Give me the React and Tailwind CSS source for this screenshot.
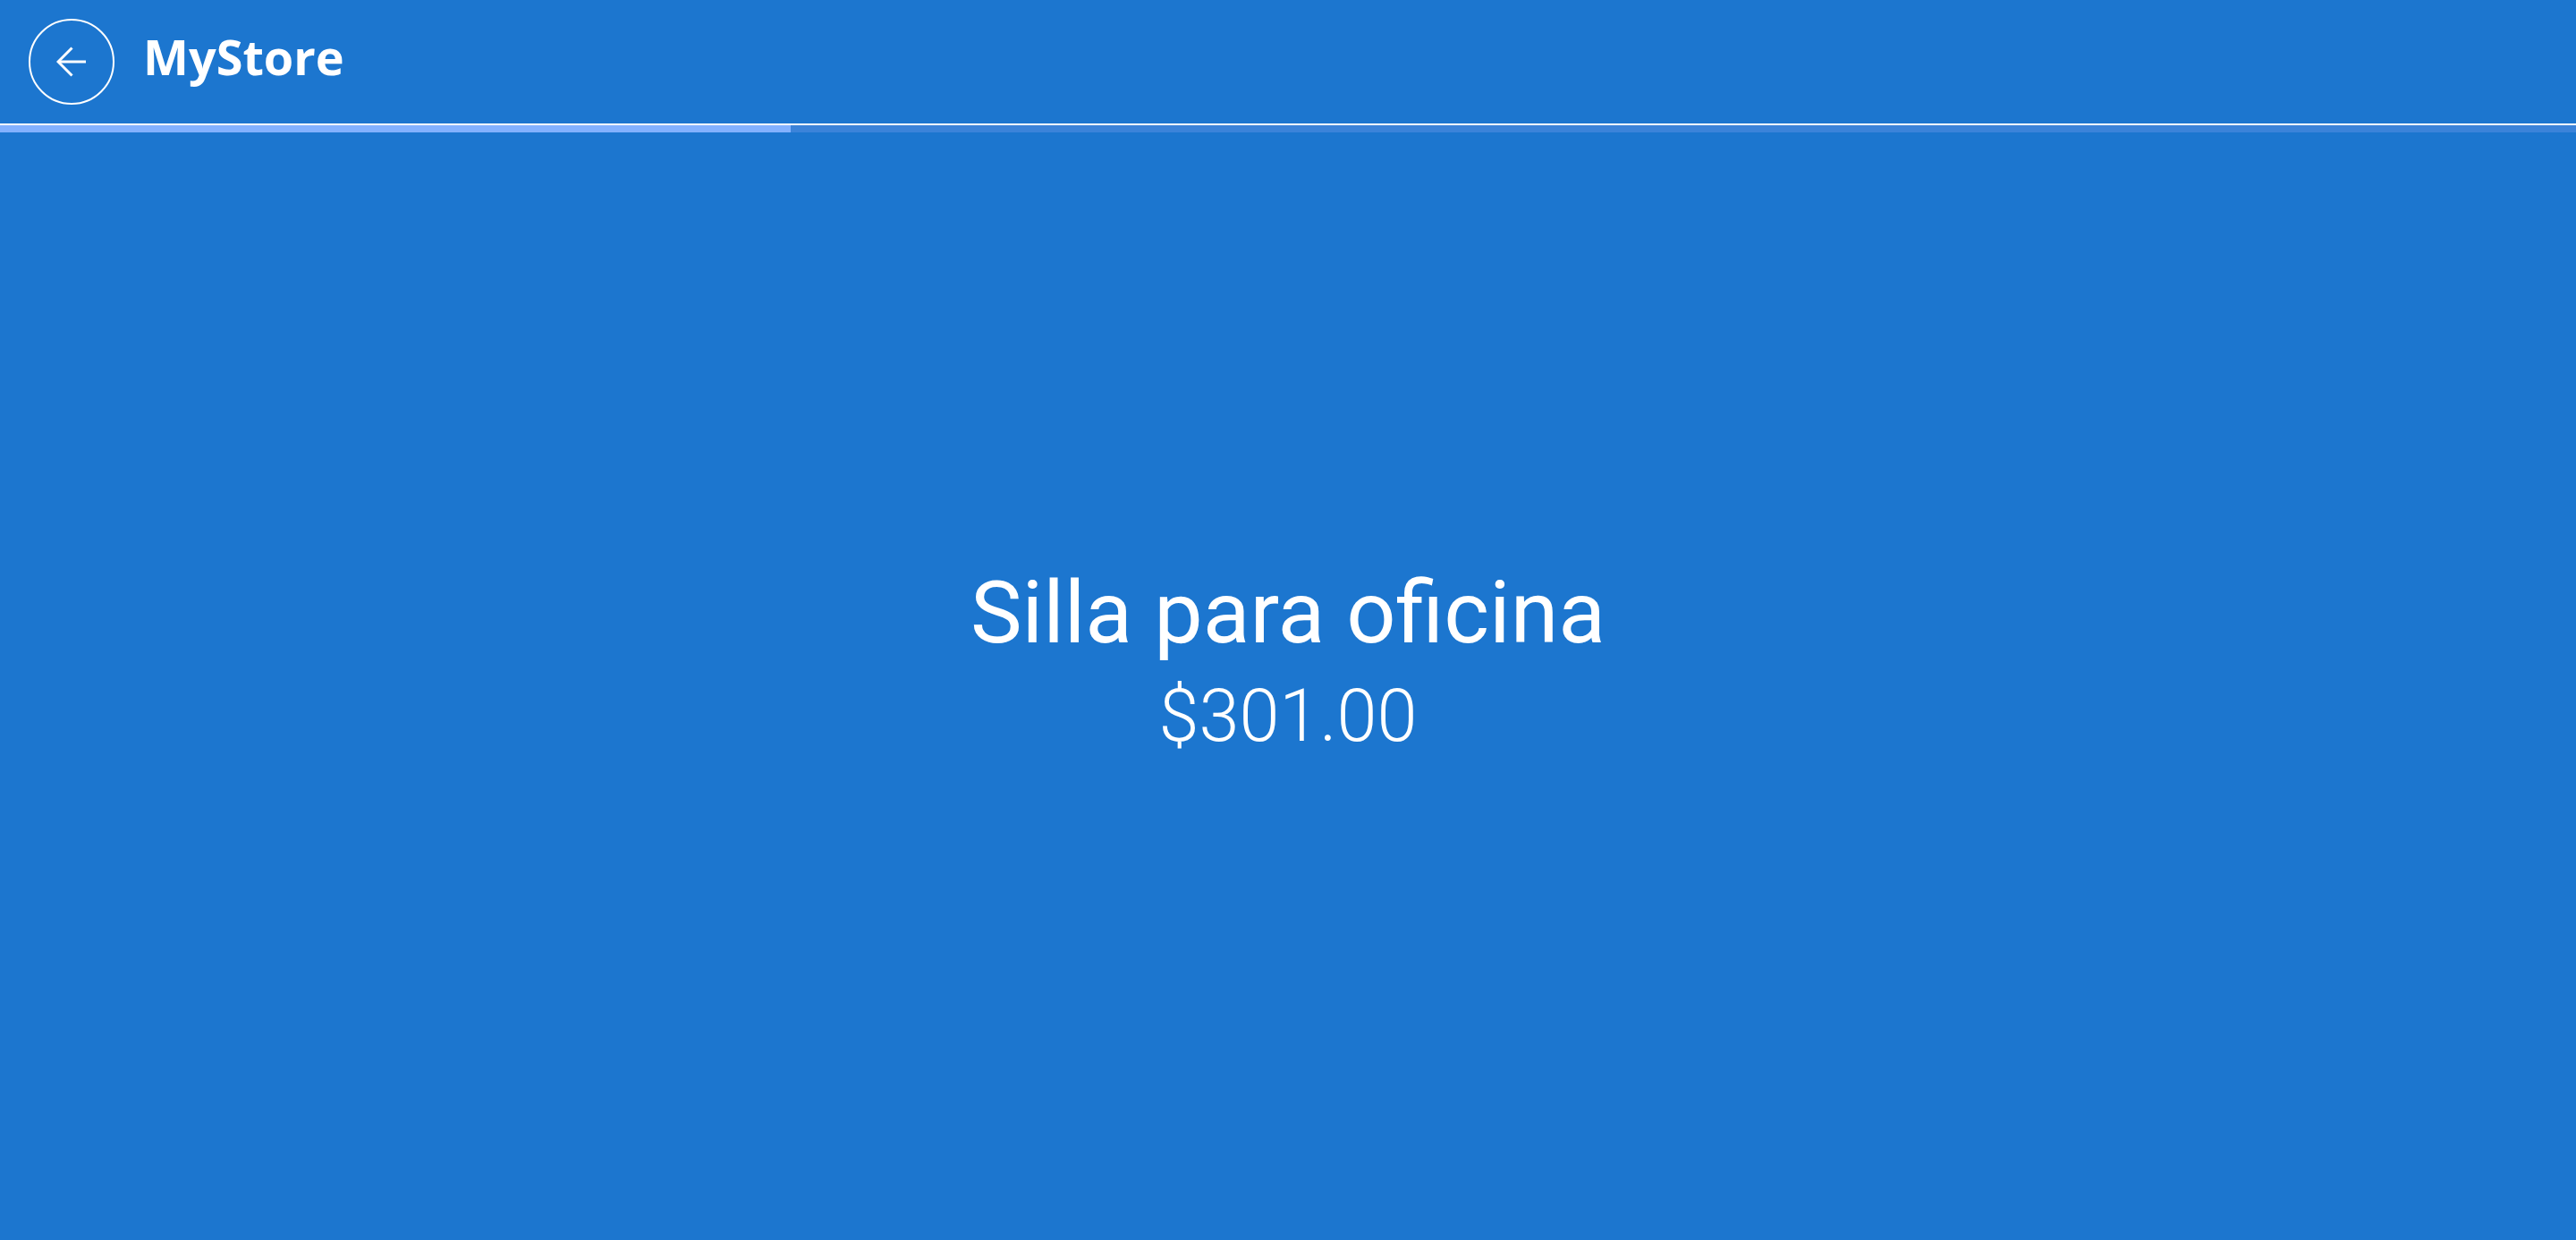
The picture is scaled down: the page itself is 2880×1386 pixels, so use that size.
import { useState } from 'react';

function BackIcon() {
  return (
    <svg width="34" height="34" viewBox="0 0 34 34" fill="none" stroke="white" strokeWidth="3">
      <path d="M33 17H2" />
      <path d="M17.5 1.5 2 17l15.5 15.5" />
    </svg>
  );
}

export default function App() {
  const [product] = useState({ name: 'Silla para oficina', price: 301 });
  const progress = 30.7;

  return (
    <div className="w-full h-screen flex flex-col bg-[#1c76cf] text-white" style={{ fontFamily: 'Roboto, sans-serif' }}>
      {/* Header */}
      <header className="h-[138px] flex items-start shrink-0">
        <button className="ml-[32px] mt-[21px] w-[96px] h-[96px] rounded-full border-2 border-white flex items-center justify-center">
          <BackIcon />
        </button>
        <h1 className="ml-[32px] mt-[23px] text-[54px] font-bold font-['Open_Sans',sans-serif]">MyStore</h1>
      </header>
      <div className="h-[2px] bg-white shrink-0" />
      <div className="h-[8px] bg-[#3b83d9] shrink-0">
        <div className="h-full bg-[#82b1ff]" style={{ width: `${progress}%` }} />
      </div>

      {/* Content */}
      <main className="flex-1 flex flex-col items-center justify-center pb-[57px]">
        <h2 className="text-[97px] leading-none font-normal">{product.name}</h2>
        <p className="mt-[26px] text-[81px] leading-none font-light">${product.price.toFixed(2)}</p>
      </main>
    </div>
  );
}
